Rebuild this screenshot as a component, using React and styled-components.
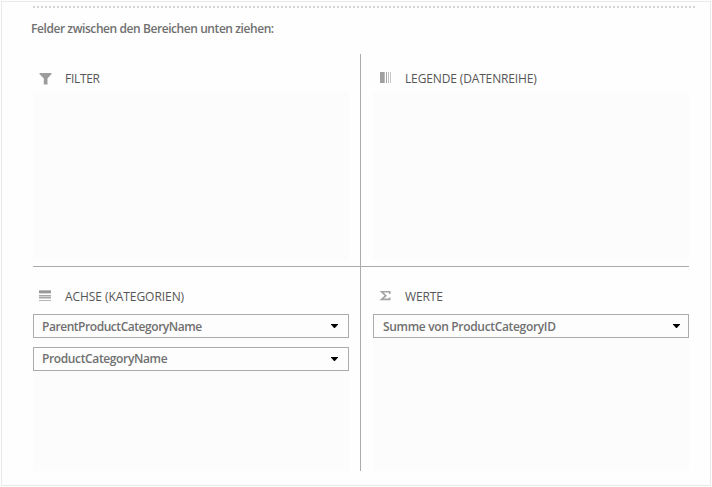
import React from "react";
import styled, { createGlobalStyle } from "styled-components";

const GlobalStyle = createGlobalStyle`
  *, *::before, *::after { box-sizing: border-box; }
  body { margin: 0; background: #fff; }
`;

const Pane = styled.main`
  width: 710px;
  height: 485px;
  margin: 1px;
  padding: 4px 15px 0 31px;
  border: 1px solid #e9e9e9;
  background: #fefefe;
  color: #707070;
  font-family: "Open Sans", "Noto Sans", sans-serif;
  font-size: 12px;
`;

const DottedRule = styled.div`
  width: 662px;
  height: 2px;
  background: repeating-linear-gradient(90deg, #d4d4d4 0 2px, transparent 2px 4px);
`;

const Hint = styled.p`
  margin: 12px 0 0 -2px;
  height: 18px;
  line-height: 18px;
  font-weight: 600;
  letter-spacing: -0.425px;
  white-space: nowrap;
`;

const Areas = styled.div`
  display: grid;
  grid-template-columns: 328px 328px;
  grid-template-rows: 213px 204px;
  width: 656px;
  margin-top: 16px;
`;

const Area = styled.section`
  display: flex;
  flex-direction: column;
  padding: ${(p) => (p.$lower ? "18px" : "13px")} ${(p) => (p.$right ? "0" : "11px")} ${(p) => (p.$lower ? "0" : "6px")} ${(p) => (p.$right ? "12px" : "0")};
  border-right: ${(p) => (p.$right ? "0" : "1px solid #ababab")};
  border-bottom: ${(p) => (p.$lower ? "0" : "1px solid #ababab")};
`;

const Header = styled.header`
  display: flex;
  align-items: center;
  gap: 12px;
  height: ${(p) => (p.$lower ? "29px" : "25px")};
  padding: 0 0 ${(p) => (p.$lower ? "6px" : "2px")} ${(p) => (p.$right ? "6px" : "5px")};
`;

const IconSlot = styled.svg`
  flex: none;
  display: block;
  width: 15px;
  height: 15px;
  margin-right: ${(p) => (p.$right ? "-1px" : "0")};
`;

const Title = styled.h2`
  margin: 0;
  color: #565656;
  font-size: 12px;
  line-height: 18px;
  font-weight: 400;
  letter-spacing: ${(p) => p.$tracking}px;
  white-space: nowrap;
`;

const DropZone = styled.div`
  flex: 1;
  display: flex;
  flex-direction: column;
  gap: 9px;
  background: #fcfcfc;
`;

const Field = styled.button`
  display: flex;
  align-items: center;
  justify-content: space-between;
  height: 24px;
  padding: 0 ${(p) => (p.$right ? "8px" : "10px")} 0 ${(p) => (p.$right ? "9px" : "8px")};
  border: 1px solid #ababab;
  background: #fdfdfd;
  color: inherit;
  font: 600 12px/18px "Open Sans", "Noto Sans", sans-serif;
  letter-spacing: ${(p) => p.$tracking}px;
`;

const FieldName = styled.span`
  padding-top: ${(p) => (p.$first ? "2px" : "0")};
`;

const Caret = styled.svg`
  display: block;
  width: 7px;
  height: 4px;
`;

const icons = {
  filter: <path d="M1.5 2H13.5V3L9.5 7.5V13.6H5.8V7.5L1.5 3Z" fill="#9c9c9c" />,
  legend: (
    <>
      <path d="M1 1h4v11H1z" fill="#a0a0a0" />
      <path d="M5 1h1v11H5z" fill="#bdbdbd" />
      <path d="M7 1h1v11H7z" fill="#a8a8a8" />
      <path d="M9 1h1v11H9z" fill="#c0c0c0" />
      <path d="M11 1h1v11h-1z" fill="#c8c8c8" />
    </>
  ),
  axis: (
    <>
      <path d="M1 1h12v1H1z" fill="#b8b8b8" />
      <path d="M1 2h12v2H1z" fill="#989898" />
      <path d="M1 4h12v1H1z" fill="#d8d8d8" />
      <path d="M1 6h12v1H1z" fill="#a8a8a8" />
      <path d="M1 7h12v1H1zM1 9h12v1H1z" fill="#d0d0d0" />
      <path d="M1 8h12v1H1z" fill="#a8a8a8" />
      <path d="M1 11h12v1H1z" fill="#b4b4b4" />
    </>
  ),
  values: (
    <path
      d="M10.7 5V2.8H2.6L6.8 6.7L2.6 10.4H10.7V8.4"
      fill="none"
      stroke="#a2a2a2"
      strokeWidth="1.6"
    />
  ),
};

const areas = [
  { title: "FILTER", icon: "filter", tracking: -0.3, fields: [] },
  { title: "LEGENDE (DATENREIHE)", icon: "legend", tracking: -0.14, right: true, fields: [] },
  {
    title: "ACHSE (KATEGORIEN)",
    icon: "axis",
    tracking: -0.06,
    lower: true,
    fields: [
      { name: "ParentProductCategoryName", tracking: -0.45 },
      { name: "ProductCategoryName", tracking: -0.37 },
    ],
  },
  {
    title: "WERTE",
    icon: "values",
    tracking: -0.1,
    right: true,
    lower: true,
    fields: [{ name: "Summe von ProductCategoryID", tracking: -0.33 }],
  },
];

export default function App() {
  return (
    <>
      <GlobalStyle />
      <Pane>
        <DottedRule />
        <Hint>Felder zwischen den Bereichen unten ziehen:</Hint>
        <Areas>
          {areas.map((a) => (
            <Area key={a.title} $right={a.right} $lower={a.lower}>
              <Header $right={a.right} $lower={a.lower}>
                <IconSlot $right={a.right} viewBox="0 0 15 15">
                  {icons[a.icon]}
                </IconSlot>
                <Title $tracking={a.tracking}>{a.title}</Title>
              </Header>
              <DropZone>
                {a.fields.map((f, i) => (
                  <Field key={f.name} $right={a.right} $tracking={f.tracking}>
                    <FieldName $first={i === 0}>{f.name}</FieldName>
                    <Caret viewBox="0 0 7 4">
                      <path d="M0 0H7V0.6L3.9 4H3.1L0 0.6Z" fill="#000" />
                    </Caret>
                  </Field>
                ))}
              </DropZone>
            </Area>
          ))}
        </Areas>
      </Pane>
    </>
  );
}
